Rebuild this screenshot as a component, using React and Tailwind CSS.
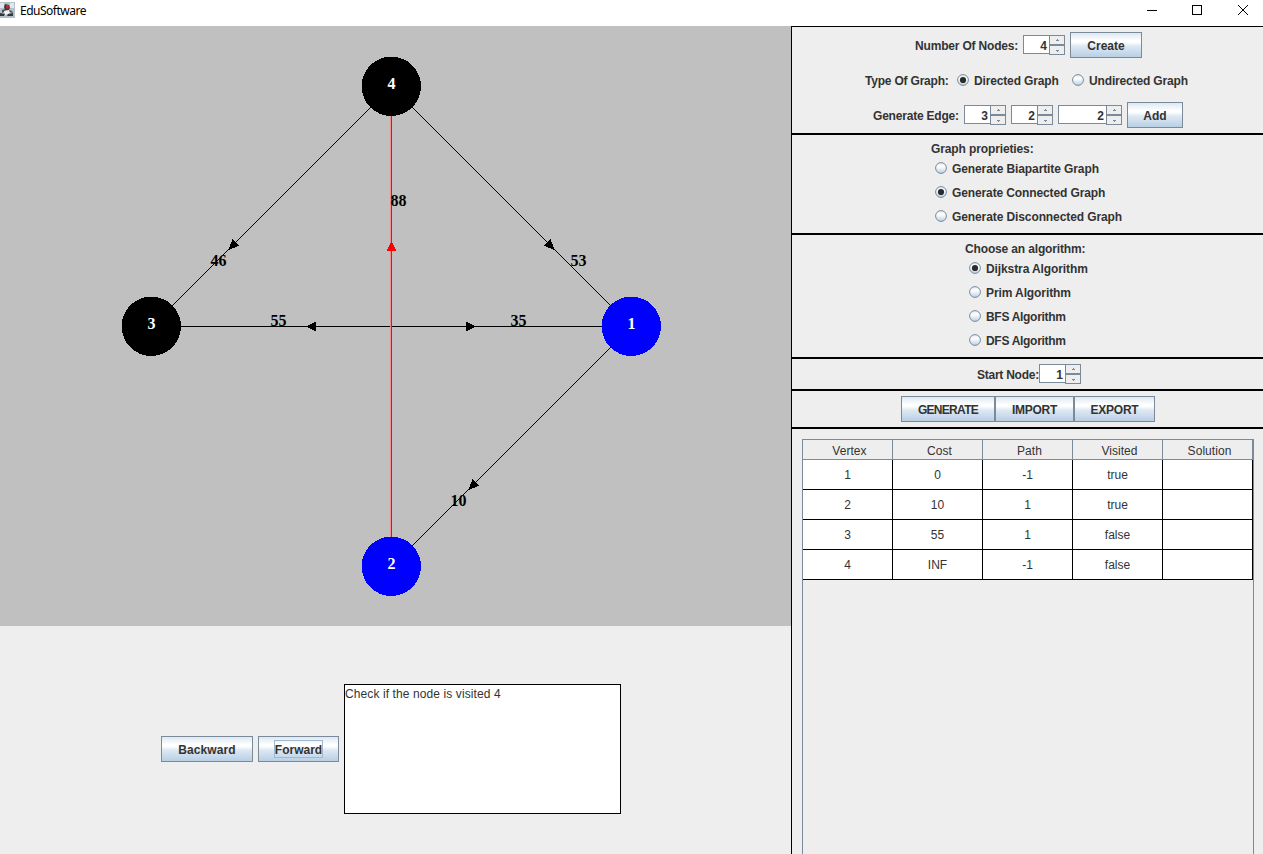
const UI = "font-['Liberation_Sans',Arial,sans-serif]";

const BUTTON_BG =
  'bg-[linear-gradient(to_bottom,#dde8f3_0%,#ffffff_32%,#ffffff_38%,#dde8f3_55%,#b8cfe5_100%)]';

function Label({ children, className = '' }) {
  return (
    <span className={`block shrink-0 whitespace-pre text-[12px] leading-[14px] font-bold text-[#333333] ${className}`}>
      {children}
    </span>
  );
}

function Button({ children, className = '', focused = false }) {
  return (
    <button
      type="button"
      className={`flex h-[26px] shrink-0 items-center justify-center whitespace-nowrap border border-[#7a8a99] pt-[2px] text-[12px] leading-[14px] font-bold text-[#333333] ${BUTTON_BG} ${className}`}
    >
      {focused ? <span className="-mt-[2px] border border-[#a3b8cc] pt-[2px]">{children}</span> : children}
    </button>
  );
}

function Arrow({ up }) {
  return (
    <svg width="5" height="3" viewBox="0 0 5 3" shapeRendering="crispEdges">
      <path d={up ? 'M2 0h1v1h1v1H1V1h1z' : 'M1 1h3v1H3v1H2V2H1z'} fill="#7a8a99" />
    </svg>
  );
}

function Spinner({ value, className = 'w-[42px]' }) {
  return (
    <div className={`flex h-5 shrink-0 items-start ${className}`}>
      <div className="flex h-[19px] flex-1 items-center justify-end border border-r-0 border-[#7a8a99] bg-white pt-[3px] pr-[2px] text-[12px] leading-[14px] font-bold text-[#333333]">
        {value}
      </div>
      <div className="flex h-5 w-4 flex-col border border-[#7a8a99]">
        <div className="flex flex-1 items-center justify-center border-b border-[#7a8a99]">
          <Arrow up />
        </div>
        <div className="flex flex-1 items-center justify-center border-t border-[#7a8a99]">
          <Arrow />
        </div>
      </div>
    </div>
  );
}

function Radio({ checked, children, className = '' }) {
  return (
    <div className={`flex h-6 shrink-0 items-center gap-[5px] ${className}`}>
      <svg width="12" height="12" viewBox="0 0 12 12" className="shrink-0">
        <defs>
          <linearGradient id="radioFill" x1="0" y1="0" x2="0" y2="1">
            <stop offset="0" stopColor="#dde8f3" />
            <stop offset="0.35" stopColor="#ffffff" />
            <stop offset="1" stopColor="#b8cfe5" />
          </linearGradient>
        </defs>
        <circle cx="6" cy="6" r="5.4" fill="url(#radioFill)" stroke="#7a8a99" strokeWidth="1" />
        {checked && <circle cx="6" cy="6" r="3.1" fill="#2b2b2b" />}
      </svg>
      <Label className="pt-[2px]">{children}</Label>
    </div>
  );
}

function TitleBar() {
  return (
    <header className="flex h-[26px] shrink-0 items-start bg-white">
      <svg width="16" height="16" viewBox="0 0 16 16" className="mt-[2px] -ml-px">
        <rect width="16" height="16" fill="#b3c0ca" />
        <path d="M1 1h4v5H1zM11 1h4v5h-4z" fill="#dfe6ec" />
        <path d="M6 2l4 1 1 3-2 3-3-1-1-3z" fill="#43343c" />
        <path d="M7 3h2l1 2-1 2-2-1z" fill="#cf1f2e" />
        <path d="M3 8l3-1 1 2-4 2zM10 8l3 1 1 2-4-1z" fill="#4a545b" />
        <path d="M5 9l5-1 1 3-5 2z" fill="#eef2f5" />
        <path d="M1 11l5 1-1 2H1zM9 12l5-1v3H8z" fill="#2f383e" />
      </svg>
      <span className="mt-[3px] ml-[5px] font-['Noto_Sans','Open_Sans',sans-serif] text-[12px] leading-4 tracking-[-0.5px] text-black">
        EduSoftware
      </span>
      <svg width="104" height="12" viewBox="0 0 104 12" className="mt-[4px] mr-[13px] ml-auto" fill="none" stroke="#000">
        <path d="M1 6.5h10" shapeRendering="crispEdges" />
        <rect x="46.5" y="1.5" width="9" height="9" shapeRendering="crispEdges" />
        <path d="M92 1l10 10M102 1L92 11" />
      </svg>
    </header>
  );
}

const NODES = [
  { id: 4, x: 391, y: 60, fill: '#000000' },
  { id: 3, x: 151, y: 300, fill: '#000000' },
  { id: 1, x: 631, y: 300, fill: '#0000ff' },
  { id: 2, x: 391, y: 540, fill: '#0000ff' },
];

const WEIGHTS = [
  [88, 390.5, 180],
  [46, 210.5, 240],
  [53, 570.5, 240],
  [55, 270.5, 300],
  [35, 510.5, 300],
  [10, 450.5, 480],
];

function Graph() {
  return (
    <svg
      width="791"
      height="600"
      viewBox="0 0 791 600"
      className="block shrink-0 bg-[#c0c0c0] font-['Liberation_Serif','Times_New_Roman',serif] text-[16px] font-bold"
    >
      <g stroke="#000" fill="none" shapeRendering="crispEdges">
        <path d="M391.5 60.5L151.5 300.5M391.5 60.5L631.5 300.5M151.5 300.5H631.5M631.5 300.5L391.5 540.5" />
      </g>
      <rect x="390" y="60" width="1" height="480" fill="#f08c8c" />
      <rect x="391" y="60" width="1" height="480" fill="#e0141e" />
      {WEIGHTS.map(([w, x, y]) => (
        <text key={w} x={x} y={y} fill="#000">
          {w}
        </text>
      ))}
      <g shapeRendering="crispEdges">
        <path d="M228 224.5L232.5 213L239 219.5z" />
        <path d="M555 224.5L550.5 213L544 219.5z" />
        <path d="M306.5 300.5L316 295.5V305.5z" />
        <path d="M475.5 300.5L466 295.5V305.5z" />
        <path d="M468 464.5L472.5 453L479 459.5z" />
        <path d="M391.5 215.5L386.5 225H396.5z" fill="#ff0000" />
      </g>
      {NODES.map((n) => (
        <g key={n.id}>
          <circle cx={n.x + 0.3} cy={n.y + 0.3} r="29.7" fill={n.fill} shapeRendering="crispEdges" />
          <text x={n.x - 3.5} y={n.y + 3} fill="#fff">
            {n.id}
          </text>
        </g>
      ))}
    </svg>
  );
}

const COLUMNS = ['Vertex', 'Cost', 'Path', 'Visited', 'Solution'];
const ROWS = [
  ['1', '0', '-1', 'true', ''],
  ['2', '10', '1', 'true', ''],
  ['3', '55', '1', 'false', ''],
  ['4', 'INF', '-1', 'false', ''],
];

function VertexTable() {
  return (
    <div className="mt-[10px] ml-[10px] w-[452px] flex-1 border border-b-0 border-[#7a8a99] text-[12px] leading-[14px] text-[#333333]">
      <div className="grid h-[20px] grid-cols-5">
        {COLUMNS.map((c) => (
          <div key={c} className="flex items-center justify-center border-r border-b border-[#7a8a99] pt-[2px] pl-[4px] tracking-[0.05px]">
            {c}
          </div>
        ))}
      </div>
      {ROWS.map((row) => (
        <div key={row[0]} className="grid h-[30px] grid-cols-5 bg-white">
          {row.map((v, i) => (
            <div key={i} className="flex items-center justify-center border-r border-b border-black">
              {v}
            </div>
          ))}
        </div>
      ))}
    </div>
  );
}

function Controls() {
  return (
    <aside className="flex w-[472px] shrink-0 flex-col border-t border-l border-black">
      <section className="flex h-[108px] shrink-0 flex-col gap-[9px] border-b-2 border-black pt-[5px]">
        <div className="flex h-[26px] items-center pl-[123px]">
          <Label className="w-[108px] pt-[2px] tracking-[-0.18px]">Number Of Nodes:</Label>
          <Spinner value={4} />
          <Button className="ml-[5px] w-[72px]">Create</Button>
        </div>
        <div className="flex h-[26px] items-center pl-[73px]">
          <Label className="w-[92px] pt-[2px] tracking-[-0.2px]">Type Of Graph:</Label>
          <Radio checked className="w-[115px] tracking-[-0.15px]">Directed Graph</Radio>
          <Radio className="tracking-[-0.15px]">Undirected Graph</Radio>
        </div>
        <div className="flex h-[26px] items-center pl-[81px]">
          <Label className="w-[91px] pt-[2px] tracking-[-0.2px]">Generate Edge:</Label>
          <Spinner value={3} />
          <Spinner value={2} className="ml-[5px] w-[42px]" />
          <Spinner value={2} className="ml-[5px] w-[64px]" />
          <Button className="ml-[5px] w-[56px]">Add</Button>
        </div>
      </section>
      <section className="flex h-[100px] shrink-0 flex-col border-b-2 border-black pt-[7px]">
        <Label className="ml-[139px] tracking-[-0.12px]">Graph proprieties:</Label>
        <Radio className="ml-[143px] tracking-[-0.1px]">Generate Biapartite Graph</Radio>
        <Radio checked className="ml-[143px] tracking-[-0.12px]">Generate Connected Graph</Radio>
        <Radio className="ml-[143px] tracking-[-0.1px]">Generate Disconnected Graph</Radio>
      </section>
      <section className="flex h-[124px] shrink-0 flex-col border-b-2 border-black pt-[7px]">
        <Label className="ml-[173px] tracking-[-0.15px]">Choose an algorithm:</Label>
        <Radio checked className="ml-[177px] tracking-[-0.1px]">Dijkstra Algorithm</Radio>
        <Radio className="ml-[177px] tracking-[-0.1px]">Prim Algorithm</Radio>
        <Radio className="ml-[177px] tracking-[-0.3px]">BFS Algorithm</Radio>
        <Radio className="ml-[177px] tracking-[-0.3px]">DFS Algorithm</Radio>
      </section>
      <section className="flex h-8 shrink-0 items-center border-b-2 border-black pl-[185px]">
        <Label className="w-[62px] pt-[2px] tracking-[-0.25px]">Start Node:</Label>
        <Spinner value={1} />
      </section>
      <section className="flex h-[38px] shrink-0 border-b-2 border-black pt-[5px] pl-[109px]">
        <Button className="w-[94px] tracking-[-0.7px]">GENERATE</Button>
        <Button className="w-[79px] tracking-[-0.25px]">IMPORT</Button>
        <Button className="w-[81px] tracking-[-0.25px]">EXPORT</Button>
      </section>
      <VertexTable />
    </aside>
  );
}

export default function App() {
  return (
    <div className={`flex h-[854px] w-[1263px] flex-col overflow-hidden bg-[#eeeeee] ${UI}`}>
      <TitleBar />
      <div className="flex min-h-0 flex-1">
        <main className="flex w-[791px] shrink-0 flex-col">
          <Graph />
          <div className="flex flex-1 items-start gap-[5px] pt-[58px] pl-[161px]">
            <Button className="mt-[52px] w-[92px] tracking-[0.1px]">Backward</Button>
            <Button focused className="mt-[52px] w-[81px]">Forward</Button>
            <div className="h-[130px] w-[277px] border border-black bg-white pt-[2px] text-[12px] leading-[14px] tracking-[0.1px] text-[#333333]">
              Check if the node is visited 4
            </div>
          </div>
        </main>
        <Controls />
      </div>
    </div>
  );
}
